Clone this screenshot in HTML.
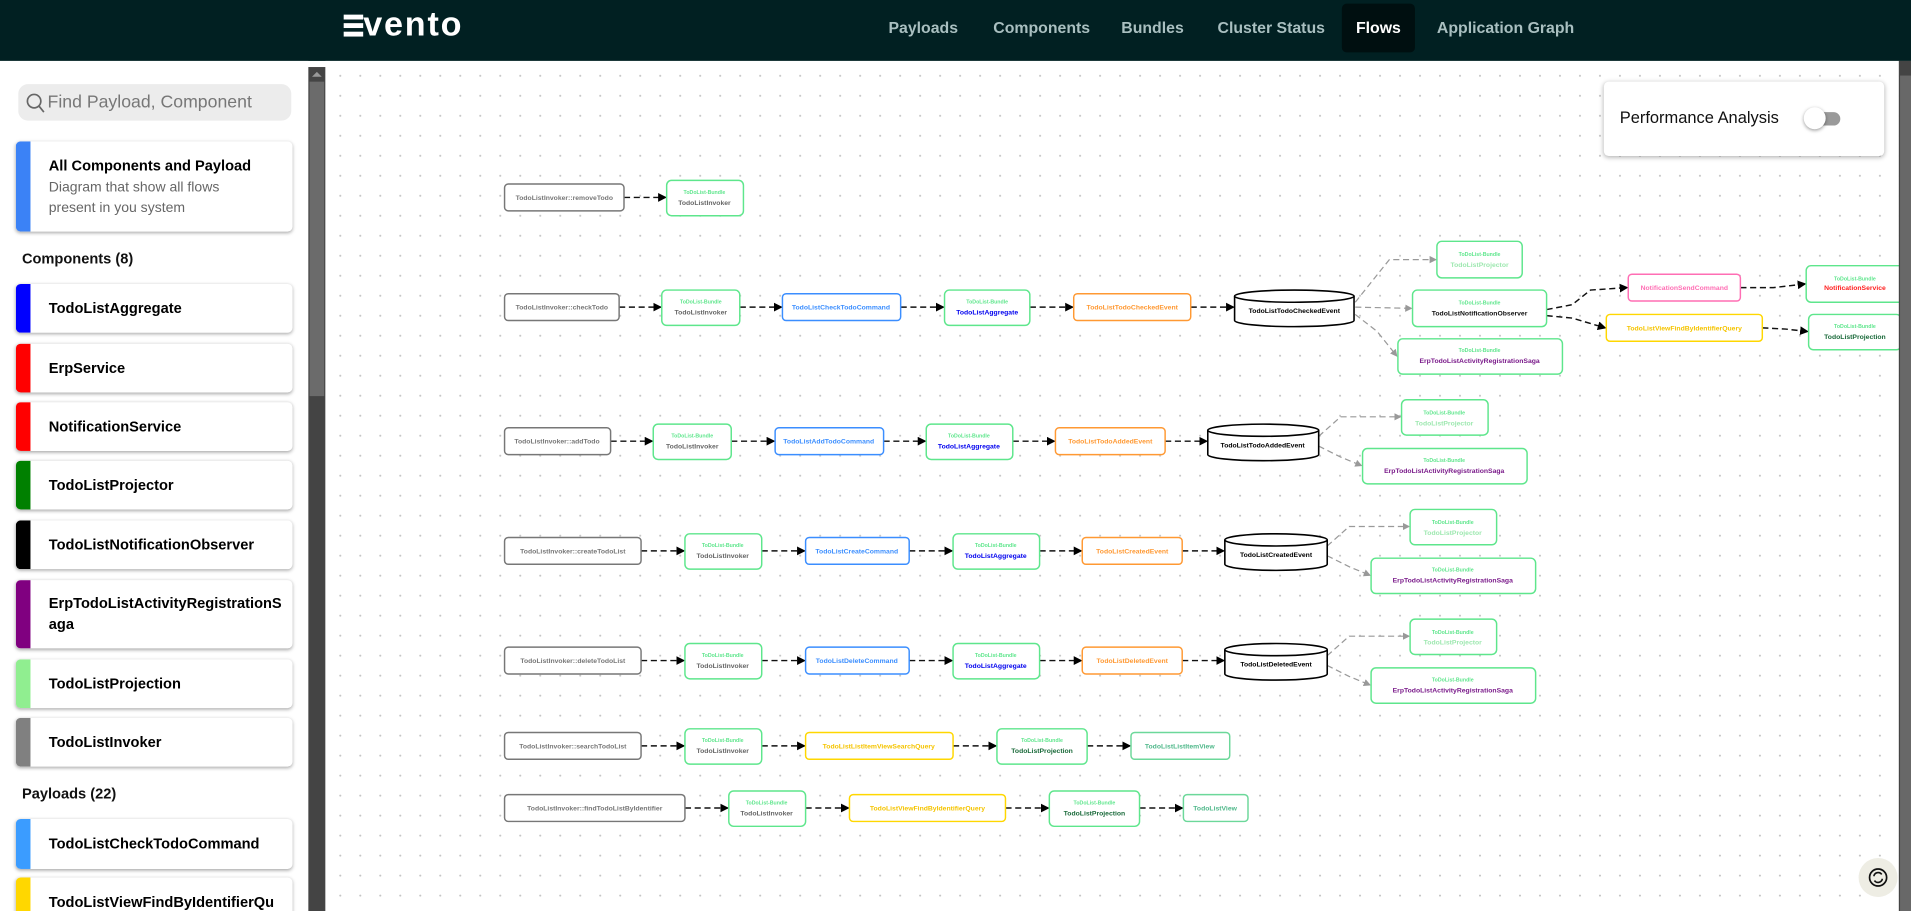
<!DOCTYPE html>
<html><head><meta charset="utf-8">
<style>
*{box-sizing:border-box;margin:0;padding:0}
html,body{width:1911px;height:911px;overflow:hidden;background:#fff;font-family:"Liberation Sans",sans-serif}
#w{position:absolute;left:0;top:0;width:1568px;height:747.5px;transform:scale(1.21875);transform-origin:0 0;overflow:hidden}
.hdr{position:absolute;left:0;top:0;width:1568px;height:50px;background:#012022}
.logo{position:absolute;left:282px;top:9px;height:24px}
.bar{position:absolute;left:0;width:16px;height:4px;background:#fff}
.logo span{position:absolute;left:16px;top:-5px;font-size:28px;font-weight:bold;color:#fff;letter-spacing:1.5px}
.nav{position:absolute;top:15px;font-size:13px;font-weight:bold;color:#a9bfc0}
.flows{position:absolute;left:1101px;top:3px;width:60px;height:40px;background:#000f10;border-radius:4px;color:#fff;font-size:13px;font-weight:bold;text-align:center;line-height:40px}
.side{position:absolute;left:0;top:50px;width:253px;height:700px;background:#fff}
.search{position:absolute;left:15px;top:19px;width:224px;height:30px;background:#ececec;border-radius:8px;font-size:14.5px;color:#777;line-height:30px;padding-left:24px}
.card{position:absolute;left:13px;width:227px;background:#fff;border-radius:4px;box-shadow:0 1px 3px rgba(0,0,0,.35);overflow:hidden}
.card i{position:absolute;left:0;top:0;bottom:0;width:12px}
.card b{position:absolute;left:27px;font-size:12px;color:#000}
.sec{position:absolute;left:18px;font-size:12px;font-weight:bold;color:#111}
.sb{position:absolute;left:253px;top:55px;width:14px;height:700px;background:#444}
.sbt{position:absolute;left:1px;top:12px;width:12px;height:258px;background:#6b6b6b}
.canvas{position:absolute;left:267px;top:50px;width:1291px;height:700px;background-color:#fff;background-image:radial-gradient(circle,#c4c4c4 0.7px,transparent 0.9px);background-size:16.41px 16.41px;background-position:4px 4px}
.rsb{position:absolute;left:1558px;top:50px;width:10px;height:700px;background:#444}
.rsbt{position:absolute;left:1px;top:12px;width:9px;height:700px;background:#686868}
.perf{position:absolute;left:1316px;top:67px;width:230px;height:61px;background:#fff;border-radius:4px;box-shadow:0 1px 4px rgba(0,0,0,.3)}
.btn{position:absolute;left:1525px;top:704px;width:32px;height:32px;border-radius:50%;background:#eeede4}
</style></head><body><div id="w">
<div class="hdr">
 <div class="logo"><div class="bar" style="top:3px"></div><div class="bar" style="top:10px"></div><div class="bar" style="top:17px"></div><span>vento</span></div>
 <div class="nav" style="left:729px">Payloads</div>
 <div class="nav" style="left:815px">Components</div>
 <div class="nav" style="left:920px">Bundles</div>
 <div class="nav" style="left:999px">Cluster Status</div>
 <div class="flows">Flows</div>
 <div class="nav" style="left:1179px">Application Graph</div>
</div>
<div class="side">
 <div class="search"><svg style="position:absolute;left:6px;top:7px" width="16" height="17" viewBox="0 0 16 17"><circle cx="7" cy="7" r="5.5" fill="none" stroke="#666" stroke-width="1.4"/><line x1="11" y1="11" x2="15" y2="16" stroke="#666" stroke-width="1.4"/></svg>Find Payload, Component</div>
 <div class="card" style="top:66px;height:74px"><i style="background:#3b82f6"></i><b style="top:13px">All Components and Payload</b><div style="position:absolute;left:27px;top:30px;font-size:11.5px;color:#666;line-height:17px">Diagram that show all flows<br>present in you system</div></div>
 <div class="sec" style="top:155px">Components (8)</div>
 <div class="card" style="top:183px;height:40px"><i style="background:#0000ff"></i><b style="top:13px">TodoListAggregate</b></div>
 <div class="card" style="top:232px;height:40px"><i style="background:#ff0000"></i><b style="top:13px">ErpService</b></div>
 <div class="card" style="top:280px;height:40px"><i style="background:#ff0000"></i><b style="top:13px">NotificationService</b></div>
 <div class="card" style="top:328px;height:40px"><i style="background:#008000"></i><b style="top:13px">TodoListProjector</b></div>
 <div class="card" style="top:377px;height:40px"><i style="background:#000"></i><b style="top:13px">TodoListNotificationObserver</b></div>
 <div class="card" style="top:426px;height:56px"><i style="background:#800080"></i><b style="top:11px;line-height:17px;width:195px;word-break:break-all">ErpTodoListActivityRegistrationSaga</b></div>
 <div class="card" style="top:491px;height:40px"><i style="background:#90ee90"></i><b style="top:13px">TodoListProjection</b></div>
 <div class="card" style="top:539px;height:40px"><i style="background:#808080"></i><b style="top:13px">TodoListInvoker</b></div>
 <div class="sec" style="top:594px">Payloads (22)</div>
 <div class="card" style="top:622px;height:41px"><i style="background:#3b9cff"></i><b style="top:13px">TodoListCheckTodoCommand</b></div>
 <div class="card" style="top:670px;height:41px"><i style="background:#ffd700"></i><b style="top:13px">TodoListViewFindByIdentifierQu</b></div>
</div>
<div class="sb"><div class="sbt"></div><svg style="position:absolute;left:3px;top:3px" width="8" height="6"><path d="M0 5L4 1L8 5Z" fill="#999"/></svg></div>
<div class="canvas"></div>
<svg style="position:absolute;left:0;top:0" width="1568" height="748" viewBox="0 0 1568 748" font-family="Liberation Sans, sans-serif" font-weight="bold" text-anchor="middle">
<defs><marker id="a" markerWidth="6" markerHeight="6" refX="5" refY="3" orient="auto"><path d="M0 0L6 3L0 6Z" fill="#000"/></marker>
<marker id="g" markerWidth="6" markerHeight="6" refX="5" refY="3" orient="auto"><path d="M0 0L6 3L0 6Z" fill="#999"/></marker></defs>
<g stroke="#111" stroke-width="1.2" stroke-dasharray="5 3" fill="none" marker-end="url(#a)">
<line x1="512" y1="162" x2="546" y2="162"/>
<line x1="508" y1="252" x2="542" y2="252"/><line x1="607" y1="252" x2="641" y2="252"/><line x1="739" y1="252" x2="774" y2="252"/><line x1="845" y1="252" x2="880" y2="252"/><line x1="977" y1="252" x2="1012" y2="252"/>
<polyline points="1269,254 1290,250 1305,238 1335,236"/><polyline points="1269,259 1290,261 1317,269"/><polyline points="1428,236 1455,236 1481,233"/><polyline points="1446,269 1465,270 1483,272"/>
<line x1="501" y1="362" x2="535" y2="362"/><line x1="600" y1="362" x2="635" y2="362"/><line x1="725" y1="362" x2="759" y2="362"/><line x1="831" y1="362" x2="865" y2="362"/><line x1="956" y1="362" x2="990" y2="362"/>
<line x1="526" y1="452" x2="561" y2="452"/><line x1="625" y1="452" x2="660" y2="452"/><line x1="746" y1="452" x2="781" y2="452"/><line x1="853" y1="452" x2="887" y2="452"/><line x1="970" y1="452" x2="1004" y2="452"/>
<line x1="526" y1="542" x2="561" y2="542"/><line x1="625" y1="542" x2="660" y2="542"/><line x1="746" y1="542" x2="781" y2="542"/><line x1="853" y1="542" x2="887" y2="542"/><line x1="970" y1="542" x2="1004" y2="542"/>
<line x1="526" y1="612" x2="561" y2="612"/><line x1="625" y1="612" x2="660" y2="612"/><line x1="782" y1="612" x2="817" y2="612"/><line x1="892" y1="612" x2="927" y2="612"/>
<line x1="562" y1="663" x2="597" y2="663"/><line x1="661" y1="663" x2="696" y2="663"/><line x1="825" y1="663" x2="860" y2="663"/><line x1="935" y1="663" x2="970" y2="663"/>
</g>
<g stroke="#999" stroke-width="1" stroke-dasharray="5 3" fill="none" marker-end="url(#g)">
<polyline points="1112,248 1140,213 1178,213"/><line x1="1112" y1="252" x2="1158" y2="253"/><polyline points="1112,258 1130,272 1146,292"/>
<polyline points="1082,358 1100,342 1149,342"/><polyline points="1082,366 1100,375 1117,382"/>
<polyline points="1089,448 1107,432 1156,432"/><polyline points="1089,456 1107,465 1124,472"/>
<polyline points="1089,538 1107,522 1156,522"/><polyline points="1089,546 1107,555 1124,562"/>
</g>
<g fill="#fff" stroke-width="1.2">
<g stroke="#777"><rect x="414" y="151" width="98" height="22" rx="3"/><rect x="414" y="241" width="94" height="22" rx="3"/><rect x="414" y="351" width="87" height="22" rx="3"/><rect x="414" y="441" width="112" height="22" rx="3"/><rect x="414" y="531" width="112" height="22" rx="3"/><rect x="414" y="601" width="112" height="22" rx="3"/><rect x="414" y="652" width="148" height="22" rx="3"/></g>
<g stroke="#5ee68c"><rect x="547" y="148" width="63" height="29" rx="4"/><rect x="543" y="238" width="64" height="29" rx="4"/><rect x="775" y="238" width="70" height="29" rx="4"/><rect x="1179" y="198" width="70" height="30" rx="4"/><rect x="1159" y="238" width="110" height="30" rx="4"/><rect x="1147" y="278" width="135" height="29" rx="4"/><rect x="1482" y="218" width="80" height="30" rx="4"/><rect x="1484" y="258" width="76" height="29" rx="4"/>
<rect x="536" y="348" width="64" height="29" rx="4"/><rect x="760" y="348" width="71" height="29" rx="4"/><rect x="1150" y="328" width="71" height="29" rx="4"/><rect x="1118" y="368" width="135" height="29" rx="4"/>
<rect x="562" y="438" width="63" height="29" rx="4"/><rect x="782" y="438" width="71" height="29" rx="4"/><rect x="1157" y="418" width="71" height="29" rx="4"/><rect x="1125" y="458" width="135" height="29" rx="4"/>
<rect x="562" y="528" width="63" height="29" rx="4"/><rect x="782" y="528" width="71" height="29" rx="4"/><rect x="1157" y="508" width="71" height="29" rx="4"/><rect x="1125" y="548" width="135" height="29" rx="4"/>
<rect x="562" y="598" width="63" height="29" rx="4"/><rect x="818" y="598" width="74" height="29" rx="4"/><rect x="598" y="649" width="63" height="29" rx="4"/><rect x="861" y="649" width="74" height="29" rx="4"/></g>
<g stroke="#6cd89a"><rect x="928" y="601" width="81" height="22" rx="3"/><rect x="971" y="652" width="53" height="22" rx="3"/></g>
<g stroke="#3b8eff"><rect x="642" y="241" width="97" height="22" rx="3"/><rect x="636" y="351" width="89" height="22" rx="3"/><rect x="661" y="441" width="85" height="22" rx="3"/><rect x="661" y="531" width="85" height="22" rx="3"/></g>
<g stroke="#ff9933"><rect x="881" y="241" width="96" height="22" rx="3"/><rect x="866" y="351" width="90" height="22" rx="3"/><rect x="888" y="441" width="82" height="22" rx="3"/><rect x="888" y="531" width="82" height="22" rx="3"/></g>
<g stroke="#ffd700"><rect x="1318" y="258" width="128" height="22" rx="3"/><rect x="661" y="601" width="121" height="22" rx="3"/><rect x="697" y="652" width="128" height="22" rx="3"/></g>
<rect x="1336" y="225" width="92" height="22" rx="3" stroke="#ff6eb4"/>
</g>
<g fill="#fff" stroke="#000" stroke-width="1.3">
<path d="M1013 243 V263 A49 5 0 0 0 1111 263 V243"/><ellipse cx="1062" cy="243" rx="49" ry="5"/>
<path d="M991 353 V373 A45.5 5 0 0 0 1082 373 V353"/><ellipse cx="1036.5" cy="353" rx="45.5" ry="5"/>
<path d="M1005 443 V463 A42 5 0 0 0 1089 463 V443"/><ellipse cx="1047" cy="443" rx="42" ry="5"/>
<path d="M1005 533 V553 A42 5 0 0 0 1089 553 V533"/><ellipse cx="1047" cy="533" rx="42" ry="5"/>
</g>
<g font-size="5.6">
<g fill="#777"><text x="463" y="164">TodoListInvoker::removeTodo</text><text x="461" y="254">TodoListInvoker::checkTodo</text><text x="457" y="364">TodoListInvoker::addTodo</text><text x="470" y="454">TodoListInvoker::createTodoList</text><text x="470" y="544">TodoListInvoker::deleteTodoList</text><text x="470" y="614">TodoListInvoker::searchTodoList</text><text x="488" y="665">TodoListInvoker::findTodoListByIdentifier</text></g>
<g fill="#3b8eff"><text x="690" y="254">TodoListCheckTodoCommand</text><text x="680" y="364">TodoListAddTodoCommand</text><text x="703" y="454">TodoListCreateCommand</text><text x="703" y="544">TodoListDeleteCommand</text></g>
<g fill="#ff9933"><text x="929" y="254">TodoListTodoCheckedEvent</text><text x="911" y="364">TodoListTodoAddedEvent</text><text x="929" y="454">TodoListCreatedEvent</text><text x="929" y="544">TodoListDeletedEvent</text></g>
<g fill="#f5c400"><text x="1382" y="271">TodoListViewFindByIdentifierQuery</text><text x="721" y="614">TodoListListItemViewSearchQuery</text><text x="761" y="665">TodoListViewFindByIdentifierQuery</text></g>
<text x="1382" y="238" fill="#ff6eb4">NotificationSendCommand</text>
<g fill="#000"><text x="1062" y="257">TodoListTodoCheckedEvent</text><text x="1036" y="367">TodoListTodoAddedEvent</text><text x="1047" y="457">TodoListCreatedEvent</text><text x="1047" y="547">TodoListDeletedEvent</text></g>
<g fill="#4fb88a"><text x="968" y="614">TodoListListItemView</text><text x="997" y="665">TodoListView</text></g>
</g>
<g font-size="4.3" fill="#5ee68c"><text x="578" y="159">ToDoList-Bundle</text><text x="575" y="249">ToDoList-Bundle</text><text x="810" y="249">ToDoList-Bundle</text><text x="1214" y="210">ToDoList-Bundle</text><text x="1214" y="250">ToDoList-Bundle</text><text x="1214" y="289">ToDoList-Bundle</text><text x="1522" y="230">ToDoList-Bundle</text><text x="1522" y="269">ToDoList-Bundle</text>
<text x="568" y="359">ToDoList-Bundle</text><text x="795" y="359">ToDoList-Bundle</text><text x="1185" y="340">ToDoList-Bundle</text><text x="1185" y="379">ToDoList-Bundle</text>
<text x="593" y="449">ToDoList-Bundle</text><text x="817" y="449">ToDoList-Bundle</text><text x="1192" y="430">ToDoList-Bundle</text><text x="1192" y="469">ToDoList-Bundle</text>
<text x="593" y="539">ToDoList-Bundle</text><text x="817" y="539">ToDoList-Bundle</text><text x="1192" y="520">ToDoList-Bundle</text><text x="1192" y="559">ToDoList-Bundle</text>
<text x="593" y="609">ToDoList-Bundle</text><text x="855" y="609">ToDoList-Bundle</text><text x="629" y="660">ToDoList-Bundle</text><text x="898" y="660">ToDoList-Bundle</text></g>
<g font-size="5.6">
<g fill="#666"><text x="578" y="168">TodoListInvoker</text><text x="575" y="258">TodoListInvoker</text><text x="568" y="368">TodoListInvoker</text><text x="593" y="458">TodoListInvoker</text><text x="593" y="548">TodoListInvoker</text><text x="593" y="618">TodoListInvoker</text><text x="629" y="669">TodoListInvoker</text></g>
<g fill="#0000ee"><text x="810" y="258">TodoListAggregate</text><text x="795" y="368">TodoListAggregate</text><text x="817" y="458">TodoListAggregate</text><text x="817" y="548">TodoListAggregate</text></g>
<g fill="#9ee8b0"><text x="1214" y="219">TodoListProjector</text><text x="1185" y="349">TodoListProjector</text><text x="1192" y="439">TodoListProjector</text><text x="1192" y="529">TodoListProjector</text></g>
<text x="1214" y="259" fill="#111">TodoListNotificationObserver</text>
<g fill="#7a1a8a"><text x="1214" y="298">ErpTodoListActivityRegistrationSaga</text><text x="1185" y="388">ErpTodoListActivityRegistrationSaga</text><text x="1192" y="478">ErpTodoListActivityRegistrationSaga</text><text x="1192" y="568">ErpTodoListActivityRegistrationSaga</text></g>
<text x="1522" y="238" fill="#ff2020">NotificationService</text>
<g fill="#1a6a3a"><text x="1522" y="278">TodoListProjection</text><text x="855" y="618">TodoListProjection</text><text x="898" y="669">TodoListProjection</text></g>
</g>
</svg>
<div class="perf"><div style="position:absolute;left:13px;top:22px;font-size:13.5px;color:#111">Performance Analysis</div>
<div style="position:absolute;left:168px;top:25px;width:26px;height:11px;border-radius:6px;background:#9a9a9a"></div>
<div style="position:absolute;left:164px;top:21px;width:18px;height:18px;border-radius:50%;background:#fff;box-shadow:0 1px 3px rgba(0,0,0,.4)"></div></div>
<div class="rsb"><div class="rsbt"></div></div>
<div class="btn"><svg width="32" height="32" viewBox="0 0 32 32"><circle cx="16" cy="16" r="7" fill="none" stroke="#111" stroke-width="1.4"/><path d="M12.5 15a3.6 3.6 0 0 1 6.5-1.5M19.5 17a3.6 3.6 0 0 1-6.5 1.5" fill="none" stroke="#111" stroke-width="1.3"/></svg></div>
</div></body></html>
